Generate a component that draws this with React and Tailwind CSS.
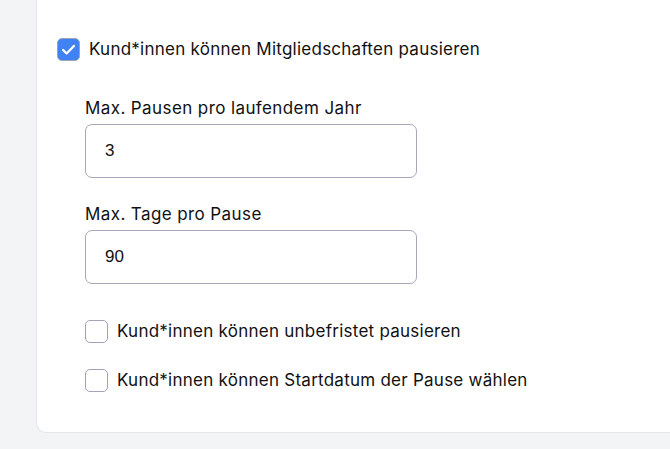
import React, { useState } from "react";

const Check = ({ checked, onChange }) => {
  return (
    <button
      type="button"
      onClick={onChange}
      className={`w-[23px] h-[23px] shrink-0 rounded-[5px] border flex items-center justify-center ${
        checked ? "bg-[#3f82f4] border-[#9aa3b8]" : "bg-white border-[#9ea3b5]"
      }`}
    >
      {checked && (
        <svg width="17" height="17" viewBox="0 0 16 16" fill="none">
          <path
            d="M2.8 8.4l3.4 3.3L13.2 4.6"
            stroke="white"
            strokeWidth="2.1"
            strokeLinecap="round"
            strokeLinejoin="round"
          />
        </svg>
      )}
    </button>
  );
};

const Field = ({ label, value, onChange }) => {
  return (
    <div>
      <label className="block text-[17px] leading-6 tracking-[0.4px] text-[#111]">
        {label}
      </label>
      <input
        type="text"
        value={value}
        onChange={onChange}
        className="mt-1 w-[332px] h-[54px] px-[19px] rounded-[7px] border border-[#a4a8ba] bg-white text-[17px] text-[#111] outline-none"
        style={{ fontFamily: "'Liberation Sans', Arial, sans-serif" }}
      />
    </div>
  );
};

const App = () => {
  const [canPause, setCanPause] = useState(true);
  const [unlimited, setUnlimited] = useState(false);
  const [startDate, setStartDate] = useState(false);
  const [maxPauses, setMaxPauses] = useState("3");
  const [maxDays, setMaxDays] = useState("90");

  return (
    <div
      className="w-full h-[449px] bg-[#f3f4f6] pl-9 overflow-hidden"
      style={{ fontFamily: "Inter, 'Noto Sans', sans-serif" }}
    >
      <div className="h-[433px] bg-white border-l border-b border-[#e4e6ea] rounded-bl-[10px] pl-5 pt-[37px]">
        <label className="flex items-center gap-[9px] cursor-pointer">
          <Check checked={canPause} onChange={() => setCanPause(!canPause)} />
          <span className="text-[17px] tracking-[0.25px] text-[#111]">
            Kund*innen können Mitgliedschaften pausieren
          </span>
        </label>

        <div className="pl-7 mt-[33px] flex flex-col gap-6">
          <Field
            label="Max. Pausen pro laufendem Jahr"
            value={maxPauses}
            onChange={(e) => setMaxPauses(e.target.value)}
          />
          <Field
            label="Max. Tage pro Pause"
            value={maxDays}
            onChange={(e) => setMaxDays(e.target.value)}
          />
        </div>

        <div className="pl-7 mt-[35px] flex flex-col gap-6">
          <label className="flex items-center gap-[9px] cursor-pointer">
            <Check checked={unlimited} onChange={() => setUnlimited(!unlimited)} />
            <span className="text-[17px] tracking-[0.25px] text-[#111]">
              Kund*innen können unbefristet pausieren
            </span>
          </label>
          <label className="flex items-center gap-[9px] cursor-pointer">
            <Check checked={startDate} onChange={() => setStartDate(!startDate)} />
            <span className="text-[17px] tracking-[0.25px] text-[#111]">
              Kund*innen können Startdatum der Pause wählen
            </span>
          </label>
        </div>
      </div>
    </div>
  );
};

export default App;
